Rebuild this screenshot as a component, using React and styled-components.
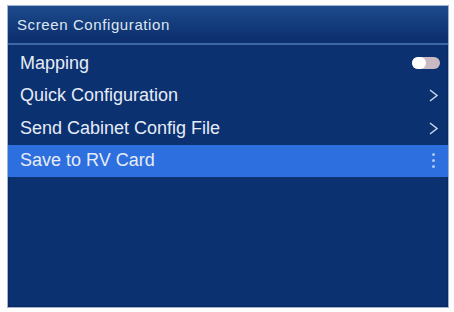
import React from 'react';
import styled, { createGlobalStyle } from 'styled-components';

const Global = createGlobalStyle`
  html, body {
    margin: 0;
    padding: 0;
    background: #fdfdfd;
  }
`;

const Page = styled.div`
  width: 454px;
  height: 312px;
  box-sizing: border-box;
  padding: 5px 5px 4px 7px;
  display: flex;
`;

const Panel = styled.div`
  flex: 1;
  display: flex;
  flex-direction: column;
  background: #0b3171;
  border: 1px solid #9fb4d2;
  box-shadow: inset 0 0 2px rgba(0, 0, 0, 0.6);
  font-family: "Liberation Sans", Arial, sans-serif;
`;

const Header = styled.div`
  height: 37px;
  display: flex;
  align-items: center;
  padding-left: 9px;
  font-size: 15px;
  letter-spacing: 0.6px;
  color: #dfe6f2;
  background: linear-gradient(to bottom, #1e4a8c 0%, #143d7d 45%, #0d3170 85%);
  border-bottom: 2px solid #3c66a6;
`;

const List = styled.div`
  display: flex;
  flex-direction: column;
  padding-top: 2px;
`;

const Row = styled.div`
  height: 32.5px;
  display: flex;
  align-items: center;
  justify-content: space-between;
  padding: 0 8px 0 12px;
  font-size: 18px;
  color: #e6ecf6;
  background: ${p => (p.active ? '#2d6fdf' : 'transparent')};
`;

const Toggle = styled.div`
  width: 28px;
  height: 12px;
  border-radius: 6px;
  background: #c9b9c3;
  position: relative;
  &::before {
    content: '';
    position: absolute;
    left: 0;
    top: 0;
    width: 14px;
    height: 12px;
    border-radius: 6px;
    background: #ffffff;
  }
`;

const Dots = styled.div`
  display: flex;
  flex-direction: column;
  gap: 3px;
  margin-right: 5px;
  span {
    width: 3px;
    height: 3px;
    border-radius: 50%;
    background: #a9c8f2;
  }
`;

const Chevron = () => (
  <svg width="11" height="15" viewBox="0 0 11 15" style={{ marginRight: 1 }}>
    <path d="M2 2 L9 7.5 L2 13" fill="none" stroke="#c9d6ec" strokeWidth="1.5" />
  </svg>
);

const items = [
  { label: 'Mapping', kind: 'toggle' },
  { label: 'Quick Configuration', kind: 'arrow' },
  { label: 'Send Cabinet Config File', kind: 'arrow' },
  { label: 'Save to RV Card', kind: 'dots', active: true },
];

export default function App() {
  return (
    <Page>
      <Global />
      <Panel>
        <Header>Screen Configuration</Header>
        <List>
          {items.map(it => (
            <Row key={it.label} active={it.active}>
              <span>{it.label}</span>
              {it.kind === 'toggle' && <Toggle />}
              {it.kind === 'arrow' && <Chevron />}
              {it.kind === 'dots' && (
                <Dots>
                  <span />
                  <span />
                  <span />
                </Dots>
              )}
            </Row>
          ))}
        </List>
      </Panel>
    </Page>
  );
}
